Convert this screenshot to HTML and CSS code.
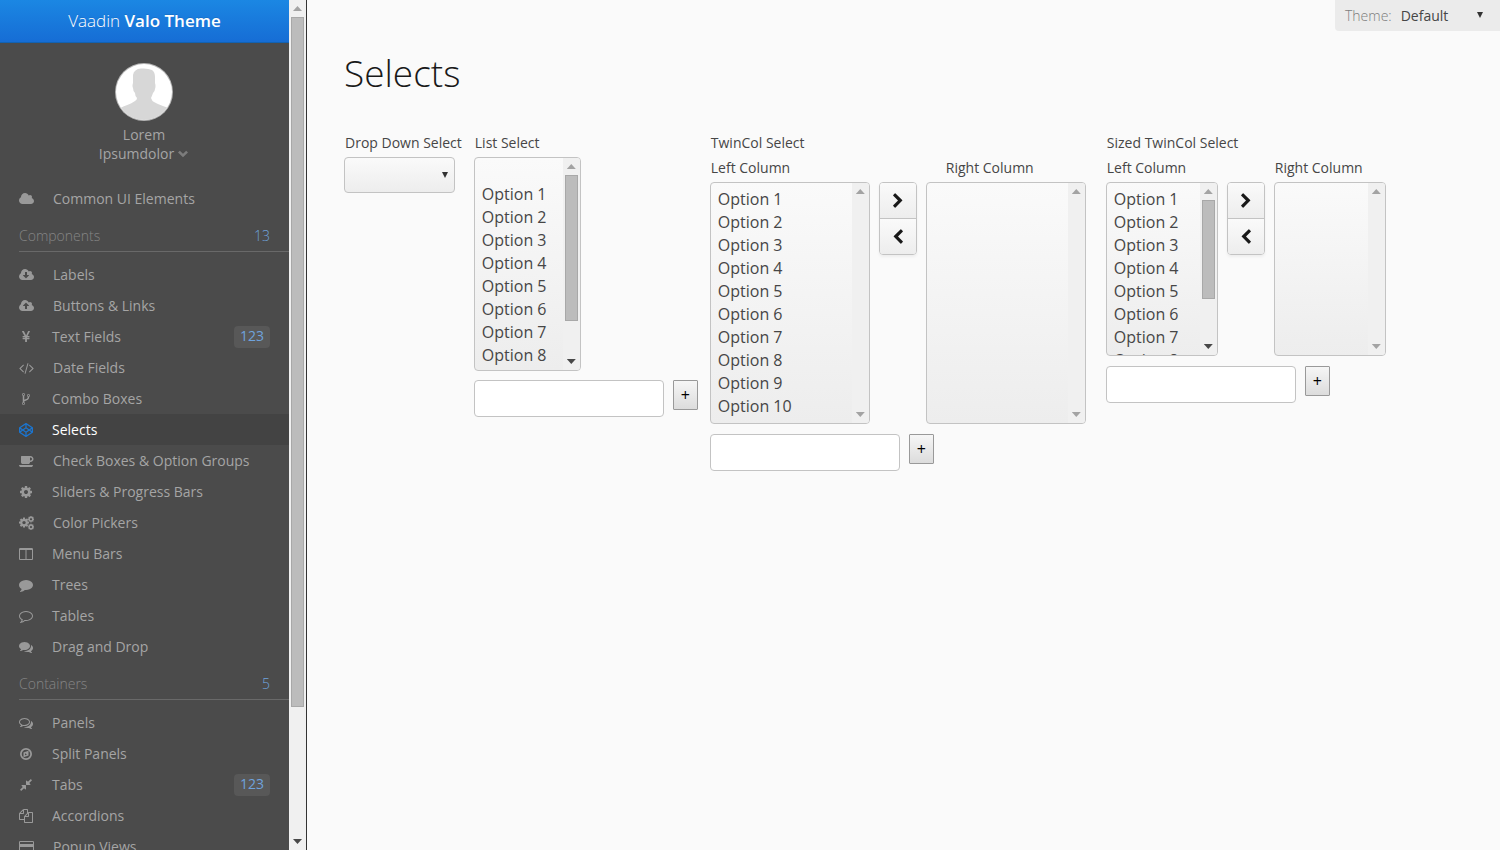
FILE: index.html
```html
<!DOCTYPE html>
<html lang="en">
<head>
<meta charset="utf-8">
<title>Vaadin Valo Theme – Selects</title>
<link rel="stylesheet" href="styles.css">
</head>
<body>
<svg class="sprite" aria-hidden="true">
  <defs>
    <symbol id="cloud" viewBox="64 0 1920 1792"><path d="M1984 1152q0 159-112.5 271.5t-271.5 112.5h-1088q-185 0-316.5-131.5t-131.5-316.5q0-132 71-241.5t187-163.5q-2-28-2-43 0-212 150-362t362-150q158 0 286.5 88t187.5 230q70-62 166-62 106 0 181 75t75 181q0 75-41 138 129 30 213 134.5t84 239.5z"/></symbol>
    <symbol id="cloud-down" viewBox="64 0 1920 1792"><path d="M1344 928q0-14-9-23t-23-9h-224v-352q0-13-9.5-22.5t-22.5-9.5h-192q-13 0-22.5 9.5t-9.5 22.5v352h-224q-13 0-22.5 9.5t-9.5 22.5q0 14 9 23l352 352q9 9 23 9t23-9l351-351q10-12 10-24zm640 224q0 159-112.5 271.5t-271.5 112.5h-1088q-185 0-316.5-131.5t-131.5-316.5q0-130 70-240t188-165q-2-30-2-43 0-212 150-362t362-150q156 0 285.5 87t188.5 231q71-62 166-62 106 0 181 75t75 181q0 76-41 138 130 31 213.5 135.5t83.5 238.5z"/></symbol>
    <symbol id="cloud-up" viewBox="64 0 1920 1792"><path d="M1344 864q0-14-9-23l-352-352q-9-9-23-9t-23 9l-351 351q-10 12-10 24 0 14 9 23t23 9h224v352q0 13 9.5 22.5t22.5 9.5h192q13 0 22.5-9.5t9.5-22.5v-352h224q13 0 22.5-9.5t9.5-22.5zm640 288q0 159-112.5 271.5t-271.5 112.5h-1088q-185 0-316.5-131.5t-131.5-316.5q0-130 70-240t188-165q-2-30-2-43 0-212 150-362t362-150q156 0 285.5 87t188.5 231q71-62 166-62 106 0 181 75t75 181q0 76-41 138 130 31 213.5 135.5t83.5 238.5z"/></symbol>
    <symbol id="yen" viewBox="0 0 1792 1792"><path d="M985.500 1536h-172q-13 0-22.500-9t-9.500-23v-330h-288q-13 0-22.500-9t-9.500-23v-103q0-13 9.500-22.500t22.500-9.500h288v-85h-288q-13 0-22.500-9t-9.500-23v-104q0-13 9.500-22.500t22.500-9.500h214l-321-578q-8-16 0-32 10-16 28-16h194q19 0 29 18l215 425q19 38 56 125 10-24 30.500-68t27.500-61l191-420q8-19 29-19h191q17 0 27 16 9 14 1 31l-313 579h215q13 0 22.500 9.500t9.500 22.500v104q0 14-9.500 23t-22.500 9h-290v85h290q13 0 22.500 9.500t9.500 22.500v103q0 14-9.500 23t-22.500 9h-290v330q0 13-9.500 22.500t-22.500 9.500z"/></symbol>
    <symbol id="code" viewBox="0 0 1920 1792"><path d="M617 1399l-50 50q-10 10-23 10t-23-10l-466-466q-10-10-10-23t10-23l466-466q10-10 23-10t23 10l50 50q10 10 10 23t-10 23l-393 393 393 393q10 10 10 23t-10 23zm591-1067l-373 1291q-4 13-15.500 19.500t-23.500 2.500l-62-17q-13-4-19.500-15.500t-2.500-24.500l373-1291q4-13 15.500-19.500t23.500-2.500l62 17q13 4 19.500 15.500t2.500 24.500zm657 651l-466 466q-10 10-23 10t-23-10l-50-50q-10-10-10-23t10-23l393-393-393-393q-10-10-10-23t10-23l50-50q10-10 23-10t23 10l466 466q10 10 10 23t-10 23z"/></symbol>
    <symbol id="fork" viewBox="0 0 1792 1792"><path d="M672 1472q0-40-28-68t-68-28-68 28-28 68 28 68 68 28 68-28 28-68zm0-1152q0-40-28-68t-68-28-68 28-28 68 28 68 68 28 68-28 28-68zm640 128q0-40-28-68t-68-28-68 28-28 68 28 68 68 28 68-28 28-68zm96 0q0 52-26 96.500t-70 69.500q-2 287-226 414-67 38-203 81-128 40-169.500 71t-41.500 100v26q44 25 70 69.500t26 96.500q0 80-56 136t-136 56-136-56-56-136q0-52 26-96.500t70-69.500v-820q-44-25-70-69.500t-26-96.500q0-80 56-136t136-56 136 56 56 136q0 52-26 96.500t-70 69.500v497q54-26 154-57 55-17 87.500-29.500t70.500-31 59-39.500 40.500-51 28-69.500 8.500-91.500q-44-25-70-69.500t-26-96.500q0-80 56-136t136-56 136 56 56 136z"/></symbol>
    <symbol id="codepen" viewBox="0 0 1792 1792"><path d="M216 1169l603 402v-359l-334-223zm-62-144l193-129-193-129v258zm819 546l603-402-269-180-334 223v359zm-77-493l272-182-272-182-272 182zm-411-275l334-223v-359l-603 402zm960 93l193 129v-258zm-138-93l269-180-603-402v359zm485-180v546q0 41-34 64l-819 546q-21 13-43 13t-43-13l-819-546q-34-23-34-64v-546q0-41 34-64l819-546q21-13 43-13t43 13l819 546q34 23 34 64z"/></symbol>
    <symbol id="coffee" viewBox="0 0 1920 1792"><path d="M1664 640q0-80-56-136t-136-56h-64v384h64q80 0 136-56t56-136zm-1664 768h1792q0 106-75 181t-181 75h-1280q-106 0-181-75t-75-181zm1856-768q0 159-112.500 271.500t-271.500 112.500h-64v32q0 92-66 158t-158 66h-704q-92 0-158-66t-66-158v-736q0-26 19-45t45-19h1152q159 0 271.500 112.500t112.500 271.500z"/></symbol>
    <symbol id="cog" viewBox="0 0 1792 1792"><path id="cog-shape" d="M1152 896q0-106-75-181t-181-75-181 75-75 181 75 181 181 75 181-75 75-181zm512-109v222q0 12-8 23t-20 13l-185 28q-19 54-39 91 35 50 107 138 10 12 10 25t-9 23q-27 37-99 108t-94 71q-12 0-26-9l-138-108q-44 23-91 38-16 136-29 186-7 28-36 28h-222q-14 0-24.500-8.500t-11.500-21.500l-28-184q-49-16-90-37l-141 107q-10 9-25 9-14 0-25-11-126-114-165-168-7-10-7-23 0-12 8-23 15-21 51-66.500t54-70.500q-27-50-41-99l-183-27q-13-2-21-12.500t-8-23.500v-222q0-12 8-23t19-13l186-28q14-46 39-92-40-57-107-138-10-12-10-24 0-10 9-23 26-36 98.500-107.500t94.500-71.500q13 0 26 10l138 107q44-23 91-38 16-136 29-186 7-28 36-28h222q14 0 24.500 8.500t11.500 21.500l28 184q49 16 90 37l142-107q9-9 24-9 13 0 25 10 129 119 165 170 7 8 7 22 0 12-8 23-15 21-51 66.500t-54 70.500q26 50 41 98l183 28q13 2 21 12.500t8 23.500z"/></symbol>
    <symbol id="cogs" viewBox="0 0 1920 1792"><use href="#cog-shape" transform="translate(-110 90) scale(.84)"/><use href="#cog-shape" transform="translate(1050 -80) scale(.54)"/><use href="#cog-shape" transform="translate(1050 910) scale(.54)"/></symbol>
    <symbol id="columns" viewBox="0 0 1792 1792"><path d="M160 1536h672v-1152h-704v1120q0 13 9.500 22.500t22.500 9.500zm1504-32v-1120h-704v1152h672q13 0 22.500-9.500t9.500-22.500zm128-1216v1216q0 66-47 113t-113 47h-1472q-66 0-113-47t-47-113v-1216q0-66 47-113t113-47h1472q66 0 113 47t47 113z"/></symbol>
    <symbol id="comment" viewBox="0 0 1792 1792"><path d="M1792 896q0 174-120 321.500t-326 233-450 85.500q-70 0-145-8-198 175-460 242-49 14-114 22-17 2-30.500-9t-17.500-29v-1q-3-4-.5-12t2-10 4.500-9.500l6-9 7-8.500 8-9q7-8 31-34.500t34.500-38 31-39.500 32.500-51 27-59 26-76q-157-89-247.500-220t-90.500-281q0-130 71-248.500t191-204.500 286-136.500 348-50.500q244 0 450 85.500t326 233 120 321.500z"/></symbol>
    <symbol id="comment-o" viewBox="0 0 1792 1792"><path d="M896 384q-204 0-381.500 69.500t-282 187.500-104.500 255q0 112 71.500 213.500t201.500 175.500l87 50-27 96q-24 91-70 172 152-63 275-171l43-38 57 6q69 8 130 8 204 0 381.500-69.500t282-187.500 104.500-255-104.500-255-282-187.500-381.500-69.500zm896 512q0 174-120 321.500t-326 233-450 85.500q-70 0-145-8-198 175-460 242-49 14-114 22h-5q-15 0-27-10.500t-16-27.500v-1q-3-4-.5-12t2-10 4.500-9.500l6-9 7-8.500 8-9q7-8 31-34.500t34.500-38 31-39.500 32.500-51 27-59 26-76q-157-89-247.500-220t-90.500-281q0-174 120-321.500t326-233 450-85.500 450 85.500 326 233 120 321.500z"/></symbol>
    <symbol id="comments" viewBox="0 0 1792 1792"><path d="M1408 768q0 139-94 257t-256.500 186.500-353.500 68.500q-86 0-176-16-124 88-278 128-36 9-86 16h-3q-11 0-20.500-8t-11.500-21q-1-3-1-6.500t.5-6.500 2-6l2.500-5 3.500-5.500 4-5 4.500-5 4-4.500q5-6 23-25t26-29.500 22.500-29 25-38.500 20.500-44q-124-72-195-177t-71-224q0-139 94-257t256.500-186.500 353.500-68.500 353.500 68.500 256.500 186.500 94 257zm384 256q0 120-71 224.500t-195 176.500q10 24 20.500 44t25 38.500 22.500 29 26 29.500 23 25q1 1 4 4.500t4.500 5 4 5 3.500 5.500l2.500 5 2 6 .5 6.500-1 6.500q-3 14-13 22t-22 7q-50-7-86-16-154-40-278-128-90 16-176 16-271 0-472-132 58 4 88 4 161 0 309-45t264-129q125-92 192-212t67-254q0-77-23-152 129 71 204 178t75 230z"/></symbol>
    <symbol id="comments-o" viewBox="0 0 1792 1792"><path d="M704 384q-153 0-286 52t-211.500 141-78.500 191q0 82 53 158t149 132l97 56-35 84q34-20 62-39l44-31 53 10q78 14 153 14 153 0 286-52t211.500-141 78.500-191-78.500-191-211.500-141-286-52zm0-128q191 0 353.500 68.500t256.500 186.500 94 257-94 257-256.500 186.500-353.500 68.500q-86 0-176-16-124 88-278 128-36 9-86 16h-3q-11 0-20.500-8t-11.500-21q-1-3-1-6.500t.5-6.500 2-6l2.500-5 3.500-5.500 4-5 4.500-5 4-4.500q5-6 23-25t26-29.500 22.500-29 25-38.500 20.500-44q-124-72-195-177t-71-224q0-139 94-257t256.500-186.500 353.500-68.500zm822 1169q10 24 20.500 44t25 38.500 22.500 29 26 29.500 23 25q1 1 4 4.500t4.500 5 4 5 3.500 5.500l2.500 5 2 6 .5 6.500-1 6.500q-3 14-13 22t-22 7q-50-7-86-16-154-40-278-128-90 16-176 16-271 0-472-132 58 4 88 4 161 0 309-45t264-129q125-92 192-212t67-254q0-77-23-152 129 71 204 178t75 230q0 120-71 224.500t-195 176.500z"/></symbol>
    <symbol id="compass" viewBox="0 0 1792 1792"><path fill-rule="evenodd" d="M896 128a768 768 0 1 1 0 1536a768 768 0 1 1 0-1536zm0 224a544 544 0 1 0 0 1088a544 544 0 1 0 0-1088z"/><path fill-rule="evenodd" d="M1216 480v610l-640 222V702zM768 790v270l256-96z"/></symbol>
    <symbol id="compress" viewBox="0 0 1792 1792"><path d="M896 960v448q0 26-19 45t-45 19-45-19l-144-144-332 332q-10 10-23 10t-23-10l-114-114q-10-10-10-23t10-23l332-332-144-144q-19-19-19-45t19-45 45-19h448q26 0 45 19t19 45zm755-672q0 13-10 23l-332 332 144 144q19 19 19 45t-19 45-45 19h-448q-26 0-45-19t-19-45v-448q0-26 19-45t45-19 45 19l144 144 332-332q10-10 23-10t23 10l114 114q10 10 10 23z"/></symbol>
    <symbol id="files" viewBox="0 0 1792 1792"><path d="M1696 384q40 0 68 28t28 68v1216q0 40-28 68t-68 28h-960q-40 0-68-28t-28-68v-288h-544q-40 0-68-28t-28-68v-672q0-40 20-88t48-76l408-408q28-28 76-48t88-20h416q40 0 68 28t28 68v328q68-40 128-40h416zm-544 213l-299 299h299v-299zm-640-384l-299 299h299v-299zm196 647l316-316v-416h-384v416q0 40-28 68t-68 28h-416v640h512v-256q0-40 20-88t48-76zm956 804v-1152h-384v416q0 40-28 68t-68 28h-416v640h896z"/></symbol>
    <symbol id="card" viewBox="0 0 1920 1792"><path fill-rule="evenodd" d="M160 128h1600q66 0 113 47t47 113v1216q0 66-47 113t-113 47H160q-66 0-113-47T0 1504V288q0-66 47-113t113-47zm-32 128v256h1664V256zm0 640v640h1664V896z"/></symbol>
    <symbol id="chevron" viewBox="0 0 1792 1792"><path d="M1363 877l-742 742q-19 19-45 19t-45-19l-166-166q-19-19-19-45t19-45l531-531-531-531q-19-19-19-45t19-45l166-166q19-19 45-19t45 19l742 742q19 19 19 45t-19 45z"/></symbol>
    <symbol id="chevron-down" viewBox="0 0 11 11"><path d="M0 4.500L1.800 2.700L5 5.800L8.200 2.700L10 4.500L5 9.300z"/></symbol>
  </defs>
</svg>

<div class="app">
  <aside class="sidebar">
    <div class="menu">
      <header class="brand">Vaadin <strong>Valo Theme</strong></header>
      <button class="user" type="button">
        <svg class="avatar" viewBox="0 0 58 58" aria-hidden="true">
          <defs><clipPath id="face"><circle cx="29" cy="29" r="28"/></clipPath></defs>
          <circle cx="29" cy="29" r="29" fill="#b4b4b4"/>
          <circle cx="29" cy="29" r="28" fill="#fff"/>
          <path clip-path="url(#face)" fill="#d7d7d7" d="M0 58V47C7 44 16 41 20 38Q22 37 22 35Q20 33 20 30Q18 28 18 25Q17 23 18 20V12Q19 6 26 5.500Q33 5 37 7Q40 9 40 14V20Q41 23 40 26Q40 28 38 30Q37 33 36 35Q37 38 39 39C44 42 51 44 58 47V58z"/>
        </svg>
        <span>Lorem</span>
        <span class="user-line">Ipsumdolor <svg class="caret" aria-hidden="true"><use href="#chevron-down"/></svg></span>
      </button>
      <nav>
        <a class="item" href="#"><svg class="icon icon-wide"><use href="#cloud"/></svg>Common UI Elements</a>
        <h2 class="section">Components <span class="count">13</span></h2>
        <a class="item" href="#"><svg class="icon icon-wide"><use href="#cloud-down"/></svg>Labels</a>
        <a class="item" href="#"><svg class="icon icon-wide"><use href="#cloud-up"/></svg>Buttons &amp; Links</a>
        <a class="item" href="#"><svg class="icon"><use href="#yen"/></svg>Text Fields<span class="badge">123</span></a>
        <a class="item" href="#"><svg class="icon icon-wide"><use href="#code"/></svg>Date Fields</a>
        <a class="item" href="#"><svg class="icon"><use href="#fork"/></svg>Combo Boxes</a>
        <a class="item item-selected" href="#" aria-current="page"><svg class="icon"><use href="#codepen"/></svg>Selects</a>
        <a class="item" href="#"><svg class="icon icon-wide"><use href="#coffee"/></svg>Check Boxes &amp; Option Groups</a>
        <a class="item" href="#"><svg class="icon"><use href="#cog"/></svg>Sliders &amp; Progress Bars</a>
        <a class="item" href="#"><svg class="icon icon-wide"><use href="#cogs"/></svg>Color Pickers</a>
        <a class="item" href="#"><svg class="icon"><use href="#columns"/></svg>Menu Bars</a>
        <a class="item" href="#"><svg class="icon"><use href="#comment"/></svg>Trees</a>
        <a class="item" href="#"><svg class="icon"><use href="#comment-o"/></svg>Tables</a>
        <a class="item" href="#"><svg class="icon"><use href="#comments"/></svg>Drag and Drop</a>
        <h2 class="section">Containers <span class="count">5</span></h2>
        <a class="item" href="#"><svg class="icon"><use href="#comments-o"/></svg>Panels</a>
        <a class="item" href="#"><svg class="icon"><use href="#compass"/></svg>Split Panels</a>
        <a class="item" href="#"><svg class="icon"><use href="#compress"/></svg>Tabs<span class="badge">123</span></a>
        <a class="item" href="#"><svg class="icon"><use href="#files"/></svg>Accordions</a>
        <a class="item" href="#"><svg class="icon icon-wide"><use href="#card"/></svg>Popup Views</a>
      </nav>
    </div>
    <div class="scroll" aria-hidden="true"><i class="arrow arrow-up"></i><div class="track"><div class="thumb" style="height:84.5%"></div></div><i class="arrow arrow-down arrow-on"></i></div>
  </aside>

  <main class="content">
    <div class="theme">
      <label class="theme-label" for="theme">Theme:</label>
      <select class="theme-select" id="theme"><option>Default</option></select>
    </div>
    <h1 class="title">Selects</h1>
    <div class="fields">
      <div class="field">
        <label class="caption" for="drop">Drop Down Select</label>
        <select class="drop" id="drop"><option></option><option>Option 1</option><option>Option 2</option></select>
      </div>

      <div class="field">
        <label class="caption" for="list">List Select</label>
        <div class="list list-single">
          <select class="options options-tight" id="list" multiple><option></option><option>Option 1</option><option>Option 2</option><option>Option 3</option><option>Option 4</option><option>Option 5</option><option>Option 6</option><option>Option 7</option><option>Option 8</option><option>Option 9</option><option>Option 10</option></select>
          <div class="scroll" aria-hidden="true"><i class="arrow arrow-up"></i><div class="track"><div class="thumb" style="height:82%"></div></div><i class="arrow arrow-down arrow-on"></i></div>
        </div>
        <div class="adder adder-close"><input class="new-item" type="text" aria-label="New list item"><button class="add" type="button">+</button></div>
      </div>

      <div class="field field-twin">
        <span class="caption">TwinCol Select</span>
        <div class="twin">
          <div class="field">
            <label class="caption" for="twin-left">Left Column</label>
            <div class="list list-large">
              <select class="options" id="twin-left" multiple><option>Option 1</option><option>Option 2</option><option>Option 3</option><option>Option 4</option><option>Option 5</option><option>Option 6</option><option>Option 7</option><option>Option 8</option><option>Option 9</option><option>Option 10</option></select>
              <div class="scroll" aria-hidden="true"><i class="arrow arrow-up"></i><div class="track"></div><i class="arrow arrow-down"></i></div>
            </div>
          </div>
          <div class="movers">
            <button class="move" type="button" aria-label="Move right"><svg class="move-icon"><use href="#chevron"/></svg></button>
            <button class="move" type="button" aria-label="Move left"><svg class="move-icon move-icon-left"><use href="#chevron"/></svg></button>
          </div>
          <div class="field">
            <label class="caption caption-inset" for="twin-right">Right Column</label>
            <div class="list list-large">
              <select class="options" id="twin-right" multiple></select>
              <div class="scroll" aria-hidden="true"><i class="arrow arrow-up"></i><div class="track"></div><i class="arrow arrow-down"></i></div>
            </div>
          </div>
        </div>
        <div class="adder"><input class="new-item" type="text" aria-label="New twin column item"><button class="add" type="button">+</button></div>
      </div>

      <div class="field">
        <span class="caption">Sized TwinCol Select</span>
        <div class="twin">
          <div class="field">
            <label class="caption" for="sized-left">Left Column</label>
            <div class="list list-sized">
              <select class="options" id="sized-left" multiple><option>Option 1</option><option>Option 2</option><option>Option 3</option><option>Option 4</option><option>Option 5</option><option>Option 6</option><option>Option 7</option><option>Option 8</option><option>Option 9</option><option>Option 10</option></select>
              <div class="scroll" aria-hidden="true"><i class="arrow arrow-up"></i><div class="track"><div class="thumb" style="height:72%"></div></div><i class="arrow arrow-down arrow-on"></i></div>
            </div>
          </div>
          <div class="movers">
            <button class="move" type="button" aria-label="Move right"><svg class="move-icon"><use href="#chevron"/></svg></button>
            <button class="move" type="button" aria-label="Move left"><svg class="move-icon move-icon-left"><use href="#chevron"/></svg></button>
          </div>
          <div class="field">
            <label class="caption" for="sized-right">Right Column</label>
            <div class="list list-sized">
              <select class="options" id="sized-right" multiple></select>
              <div class="scroll" aria-hidden="true"><i class="arrow arrow-up"></i><div class="track"></div><i class="arrow arrow-down"></i></div>
            </div>
          </div>
        </div>
        <div class="adder"><input class="new-item" type="text" aria-label="New sized column item"><button class="add" type="button">+</button></div>
      </div>
    </div>
  </main>
</div>
</body>
</html>
```
FILE: styles.css
```css
* { box-sizing: border-box; }

body {
  margin: 0;
  background: #fafafa;
  color: #464646;
  font: 400 14px/19px "Open Sans", "Noto Sans", sans-serif;
}

button, input, select { font: inherit; color: inherit; }

.sprite { position: absolute; width: 0; height: 0; }

.app { display: flex; height: 100vh; }

/* Sidebar */
.sidebar {
  flex: none;
  display: flex;
  overflow: hidden;
  border-right: 1px solid #333;
}

.menu {
  width: 289px;
  overflow: hidden;
  background: #4b4b4b;
  color: #a5a5a5;
}

.brand {
  height: 43px;
  border-bottom: 1px solid #1362b1;
  background: linear-gradient(#1b87e3, #166dd5);
  color: #fff;
  font-size: 17px;
  font-weight: 300;
  line-height: 42px;
  text-align: center;
  text-shadow: 0 -1px 0 rgba(0, 0, 0, .1);
}

.brand strong { font-weight: 600; }

.user {
  display: flex;
  flex-direction: column;
  align-items: center;
  width: 288px;
  padding: 20px 0;
  border: 0;
  background: none;
}

.avatar { width: 58px; height: 58px; margin-bottom: 4px; }
.user-line { display: flex; align-items: center; gap: 4px; }
.caret { width: 11px; height: 11px; fill: #7c7c7c; }

.item {
  display: flex;
  align-items: center;
  height: 31px;
  padding: 0 19px;
  color: inherit;
  text-decoration: none;
}

.item-selected { background: #434343; color: #fff; }

.icon { width: 14px; height: 14px; margin-right: 19px; fill: #999; }
.icon-wide { width: 15px; }
.item-selected .icon { fill: #1b75d0; }

.badge {
  margin-left: auto;
  padding: 0 6px 3px;
  border-radius: 4px;
  background: #585858;
  color: #6fa3dd;
}

.section {
  display: flex;
  justify-content: space-between;
  margin: 0 0 7px 19px;
  padding: 7px 19px 0 0;
  border-bottom: 1px solid #696969;
  color: #858585;
  font-size: 14px;
  font-weight: 300;
  line-height: 30px;
}

.count { color: #6fa3dd; }

/* Scrollbars */
.scroll {
  flex: none;
  display: flex;
  flex-direction: column;
  width: 17px;
  background: #f0f0f0;
}

.arrow {
  display: flex;
  align-items: center;
  justify-content: center;
  height: 17px;
}

.arrow::before {
  content: "";
  width: 9px;
  height: 5px;
  background: #a3a3a3;
}

.arrow-up::before { clip-path: polygon(50% 0, 100% 100%, 0 100%); }
.arrow-down::before { clip-path: polygon(0 0, 100% 0, 50% 100%); }
.arrow-on::before { background: #484848; }

.track { flex: 1; padding: 0 2px; }
.thumb { border: 1px solid #a8a8a8; background: #bcbcbc; }

/* Content */
.content {
  flex: 1;
  min-width: 0;
  padding-left: 37px;
}

.theme {
  display: flex;
  align-items: center;
  width: 165px;
  height: 31px;
  margin-left: auto;
  padding: 0 15px 0 10px;
  border-radius: 0 0 0 4px;
  background: #ebebeb;
}

.theme-label { color: #7d7d7d; font-weight: 300; }

.theme-select, .drop {
  appearance: none;
  background-repeat: no-repeat;
}

.theme-select {
  flex: 1;
  margin-left: 9px;
  padding: 0;
  border: 0;
  background-color: transparent;
  background-image: url("data:image/svg+xml,%3Csvg xmlns='http://www.w3.org/2000/svg' width='8' height='7'%3E%3Cpath d='M1 0h6L4 6z' fill='%23333'/%3E%3C/svg%3E");
  background-position: right 1px center;
}

.title {
  margin: 15px 0 32px;
  color: #191919;
  font-size: 37px;
  font-weight: 300;
  line-height: 54px;
}

.fields { display: flex; align-items: flex-start; gap: 12px; }
.field { display: flex; flex-direction: column; align-items: flex-start; }
.field-twin { padding-right: 8px; }

.caption {
  padding: 0 0 3px 1px;
  line-height: 22px;
  white-space: nowrap;
}

.caption-inset { padding-left: 20px; }

.drop {
  width: 111px;
  height: 36px;
  padding: 0 10px;
  border: 1px solid #c3c3c3;
  border-radius: 4px;
  background-color: #f5f5f5;
  background-image: url("data:image/svg+xml,%3Csvg xmlns='http://www.w3.org/2000/svg' width='8' height='7'%3E%3Cpath d='M1 0h6L4 6z' fill='%23333'/%3E%3C/svg%3E"), linear-gradient(#fafafa, #ededed);
  background-position: right 5px center, 0 0;
}

.list {
  display: flex;
  overflow: hidden;
  border: 1px solid #c3c3c3;
  border-radius: 4px;
  background: linear-gradient(#fafafa, #ededed);
}

.list-single { width: 107px; height: 214px; }
.list-large { width: 160px; height: 242px; }
.list-sized { width: 112px; height: 174px; }

.options {
  flex: 1;
  min-width: 0;
  padding: 5px 0 0 7px;
  border: 0;
  border-radius: 0;
  outline: 0;
  background: transparent;
  font-size: 16px;
  overflow: hidden;
  scrollbar-width: none;
}

.options-tight { padding-top: 2px; }

.options option {
  height: 23px;
  min-height: 23px;
  padding: 0;
  line-height: 23px;
}

.twin { display: flex; gap: 9px; }

.movers {
  display: flex;
  flex-direction: column;
  align-self: flex-start;
  margin-top: 25px;
  overflow: hidden;
  border: 1px solid #c3c3c3;
  border-radius: 4px;
  box-shadow: 0 2px 3px rgba(0, 0, 0, .05);
}

.move {
  display: flex;
  align-items: center;
  justify-content: center;
  width: 36px;
  height: 35px;
  padding: 0;
  border: 0;
  background: linear-gradient(#fafafa, #ededed);
}

.move + .move { height: 36px; border-top: 1px solid #c3c3c3; }
.move-icon { width: 16px; height: 16px; fill: #191919; }
.move-icon-left { transform: scaleX(-1); }

.adder { display: flex; align-items: flex-start; gap: 9px; margin-top: 10px; }
.adder-close { margin-top: 9px; }

.new-item {
  width: 190px;
  height: 37px;
  padding: 0 8px;
  border: 1px solid #c3c3c3;
  border-radius: 4px;
  background: #fff;
}

.add {
  width: 25px;
  height: 30px;
  padding: 0;
  border: 1px solid #999;
  border-radius: 1px;
  background: linear-gradient(#f6f6f6, #dcdcdc);
  color: #000;
  font-size: 16px;
}
```
